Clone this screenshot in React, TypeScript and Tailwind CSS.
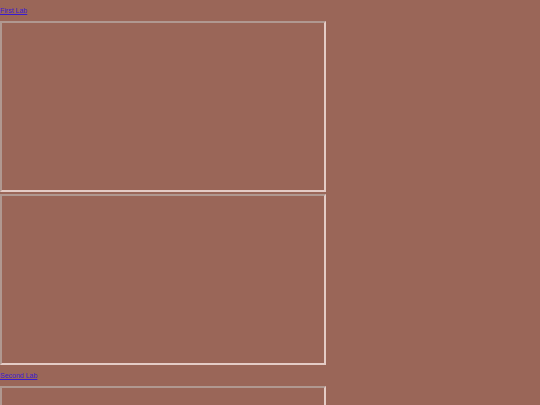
export default function App() {
  const labs = ["First Lab", "Second Lab"];
  return (
    <div className="min-h-screen w-full overflow-hidden bg-[#9a6658] font-['Liberation_Sans',Arial,sans-serif]">
      {labs.map((name) => (
        <section key={name} className="flex flex-col">
          <div className="flex h-[21px] items-center">
            <a href="#" className="text-[7px] leading-[8px] text-[#3a1ccf] underline">
              {name}
            </a>
          </div>
          <div className="flex flex-col gap-[2px]">
            <div className="h-[171px] w-[326px] border-2 border-t-[#b09890] border-l-[#b09890] border-b-[#e4ccc6] border-r-[#e4ccc6]" />
            <div className="h-[171px] w-[326px] border-2 border-t-[#b09890] border-l-[#b09890] border-b-[#e4ccc6] border-r-[#e4ccc6]" />
          </div>
        </section>
      ))}
    </div>
  );
}
